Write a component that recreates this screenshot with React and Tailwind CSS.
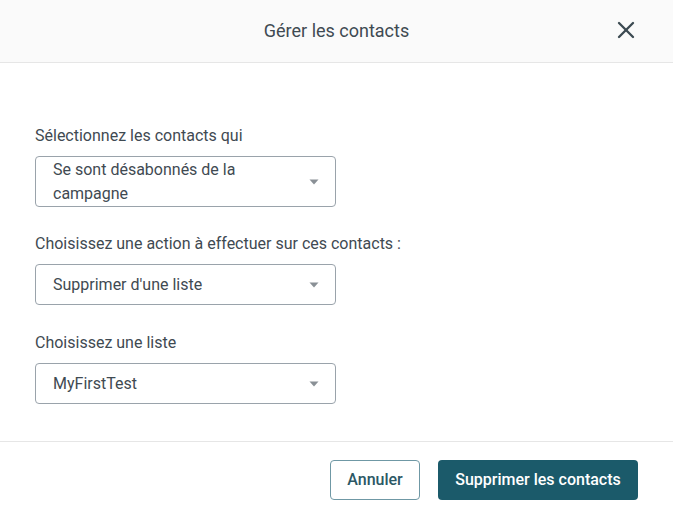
import { X } from 'lucide-react'

function Caret() {
  return (
    <svg width="10" height="6" viewBox="0 0 10 6" className="shrink-0">
      <path d="M0.5 0.5h9L5 5.5z" fill="#8a9096" />
    </svg>
  )
}

function SelectBox({ children, tall }) {
  return (
    <div
      className={`flex w-[301px] items-center justify-between rounded border border-[#9aa3ab] bg-white pl-[17px] pr-[16px] ${tall ? 'h-[51px]' : 'h-[41px]'}`}
    >
      <span className="w-[225px] text-[16px] leading-[24px] text-[#3f4a52]">{children}</span>
      <Caret />
    </div>
  )
}

function Field({ label, children, tall, className = '' }) {
  return (
    <div className={className}>
      <p className="mb-[10px] text-[16px] leading-[20px] text-[#3f4a52]">{label}</p>
      <SelectBox tall={tall}>{children}</SelectBox>
    </div>
  )
}

export default function App() {
  return (
    <div className="flex h-[518px] w-[673px] flex-col bg-white font-['Roboto',sans-serif]">
      <header className="relative flex h-[63px] shrink-0 items-center justify-center border-b border-[#e6e6e6] bg-[#fafafa] pb-[2px]">
        <h1 className="text-[18px] text-[#3f4a52]">Gérer les contacts</h1>
        <button className="absolute right-[33px] top-[16px] text-[#3c4a52]" aria-label="Fermer">
          <X size={28} strokeWidth={2} />
        </button>
      </header>

      <main className="flex-1 px-[35px] pt-[63px]">
        <Field label="Sélectionnez les contacts qui" tall>
          Se sont désabonnés de la campagne
        </Field>
        <Field label="Choisissez une action à effectuer sur ces contacts :" className="mt-[27px]">
          Supprimer d'une liste
        </Field>
        <Field label="Choisissez une liste" className="mt-[28px]">
          MyFirstTest
        </Field>
      </main>

      <footer className="flex h-[77px] shrink-0 items-start justify-end gap-[18px] border-t border-[#e6e6e6] pl-[35px] pr-[35px] pt-[18px]">
        <button className="h-[40px] w-[90px] rounded border border-[#6f98a5] bg-white text-[16px] font-medium text-[#2c5865]">
          Annuler
        </button>
        <button className="h-[40px] w-[200px] rounded bg-[#1b5a6a] text-[16px] font-medium text-white">
          Supprimer les contacts
        </button>
      </footer>
    </div>
  )
}
